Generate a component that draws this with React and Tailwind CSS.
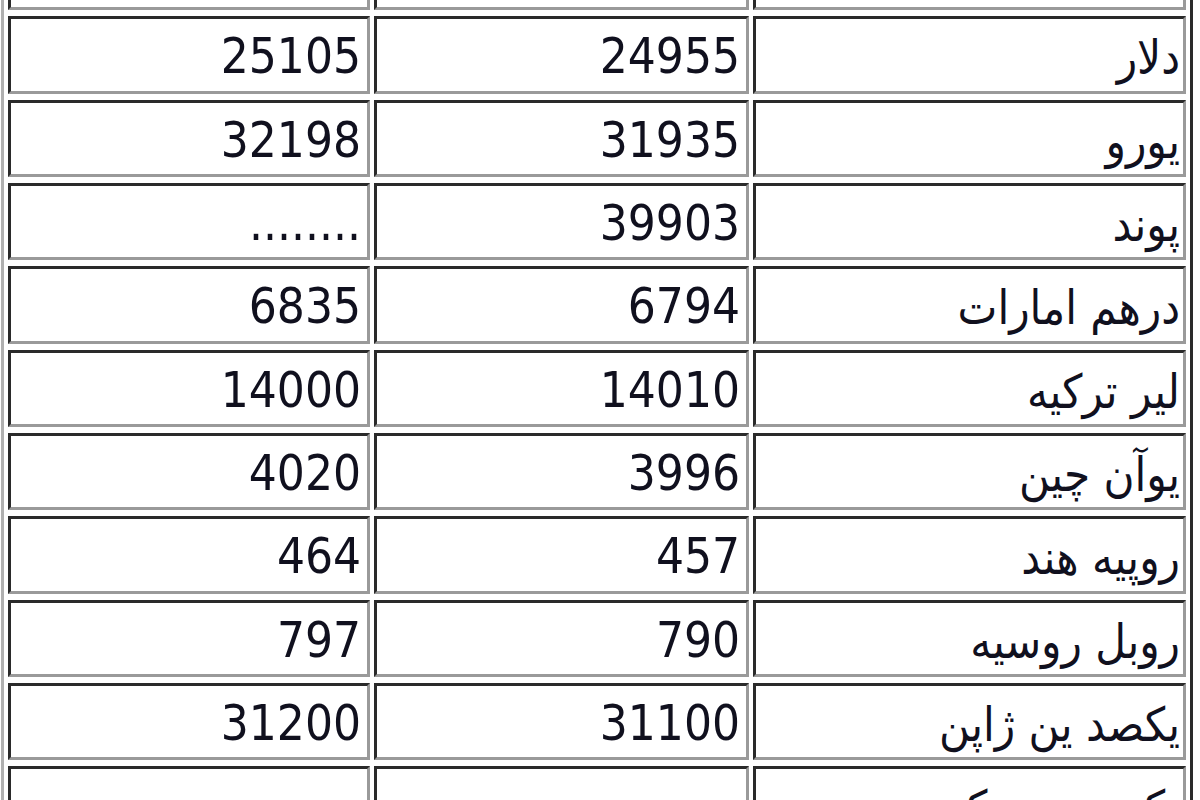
import React from "react";

const rows = [
  { name: "دلار", buy: "24955", sell: "25105" },
  { name: "یورو", buy: "31935", sell: "32198" },
  { name: "پوند", buy: "39903", sell: "........" },
  { name: "درهم امارات", buy: "6794", sell: "6835" },
  { name: "لیر ترکیه", buy: "14010", sell: "14000" },
  { name: "یوآن چین", buy: "3996", sell: "4020" },
  { name: "روپیه هند", buy: "457", sell: "464" },
  { name: "روبل روسیه", buy: "790", sell: "797" },
  { name: "یکصد ین ژاپن", buy: "31100", sell: "31200" },
  { name: "یکصد وون کره", buy: "", sell: "" },
];

const cell =
  "h-[77.33px] border-[3px] border-t-[#2a2a2a] border-l-[#2a2a2a] border-b-[#9a9a9a] border-r-[#9a9a9a] bg-white align-middle p-0";

const App = () => {
  return (
    <div className="h-[800px] w-[1200px] overflow-hidden bg-white">
      <table
        dir="rtl"
        className="-mt-[76px] ml-px border-separate border-spacing-x-[4px] border-spacing-y-[6px] border-[3px] border-t-[#b0b0b0] border-l-[#b0b0b0] border-b-[#2a2a2a] border-r-[#2a2a2a] text-[#10101e] [font-family:'DejaVu_Sans_Condensed','Liberation_Sans','DejaVu_Sans',sans-serif]"
      >
        <tbody>
          <tr>
            <td className={cell + " w-[433px] text-center text-[44px]"}>نام ارز</td>
            <td className={cell + " w-[375px] text-center text-[44px]"}>قیمت خرید</td>
            <td className={cell + " w-[362px] text-center text-[44px]"}>قیمت فروش</td>
          </tr>
          {rows.map((r) => (
            <tr key={r.name}>
              <td className={cell + " w-[433px] pr-[3px] pt-[6px] text-right text-[47px] leading-none"}>{r.name}</td>
              <td dir="ltr" className={cell + " w-[375px] pr-[6px] pt-[4px] text-right text-[49px] leading-none"}>
                {r.buy}
              </td>
              <td dir="ltr" className={cell + " w-[362px] pr-[6px] pt-[4px] text-right text-[49px] leading-none"}>
                {r.sell}
              </td>
            </tr>
          ))}
        </tbody>
      </table>
    </div>
  );
};

export default App;
